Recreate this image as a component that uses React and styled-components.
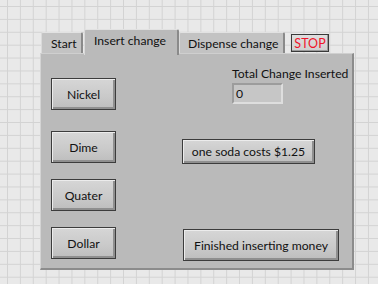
import React, { useState } from 'react';
import styled, { createGlobalStyle } from 'styled-components';

const Global = createGlobalStyle`
    html, body {
        margin: 0;
        padding: 0;
    }
    body {
        width: 378px;
        height: 284px;
        overflow: hidden;
        font-family: Lato, "Liberation Sans", sans-serif;
        background-color: #e9e9e9;
        background-image:
            linear-gradient(to right, #d3d3d3 1px, transparent 1px),
            linear-gradient(to bottom, #d3d3d3 1px, transparent 1px);
        background-size: 12.9px 12.9px;
        background-position: 7px 6px;
    }
`;

const Page = styled.div`
    padding: 29px 0 0 40px;
    width: 378px;
    height: 284px;
    box-sizing: border-box;
`;

const TabRow = styled.div`
    display: flex;
    align-items: flex-end;
    height: 24px;
    padding-left: 1px;
    position: relative;
    z-index: 1;
`;

const Tab = styled.div`
    box-sizing: border-box;
    height: ${p => (p.$active ? '26px' : '21px')};
    margin-bottom: ${p => (p.$active ? '-2px' : '0')};
    width: ${p => p.$w}px;
    margin-right: ${p => p.$gap || 0}px;
    padding-left: ${p => p.$pad}px;
    display: flex;
    align-items: center;
    white-space: nowrap;
    font-size: 12.2px;
    color: #111;
    background: ${p => (p.$active ? '#bababa' : '#c3c3c3')};
    border-top: 1px solid #e2e2e2;
    border-left: 1px solid #dadada;
    border-right: 2px solid #8a8a8a;
    border-radius: 2px 2px 0 0;
    padding-bottom: ${p => (p.$active ? '4px' : '0')};
`;

const StopButton = styled.button`
    box-sizing: border-box;
    height: 18px;
    width: 38px;
    margin-left: 6px;
    margin-bottom: 1px;
    padding: 0;
    font-family: inherit;
    font-size: 12.5px;
    color: #f0142a;
    background: linear-gradient(#dedede, #cfcfcf);
    border: 1px solid #3a3a3a;
    box-shadow: inset -1px -1px 0 #9a9a9a;
`;

const Body = styled.div`
    box-sizing: border-box;
    width: 314px;
    height: 217px;
    background: #bababa;
    border-top: 1px solid #cfcfcf;
    border-left: 1px solid #d4d4d4;
    border-right: 2px solid #8c8c8c;
    border-bottom: 2px solid #8c8c8c;
    display: flex;
    padding: 24px 0 0 10px;
`;

const CoinColumn = styled.div`
    display: flex;
    flex-direction: column;
    width: 65px;
`;

const PanelButton = styled.button`
    box-sizing: border-box;
    width: ${p => p.$w}px;
    height: ${p => p.$h || 32}px;
    margin-top: ${p => p.$top || 0}px;
    margin-left: ${p => p.$left || 0}px;
    padding: 0;
    white-space: nowrap;
    font-family: inherit;
    font-size: 12.2px;
    color: #111;
    background: linear-gradient(#d6d6d6, #c9c9c9 60%, #bdbdbd);
    border: 1px solid #3c3c3c;
    box-shadow:
        inset 1px 1px 0 #ececec,
        inset -2px -2px 0 #8f8f8f;
    cursor: pointer;
`;

const RightColumn = styled.div`
    display: flex;
    flex-direction: column;
    margin-left: 66px;
    width: 170px;
`;

const Label = styled.div`
    font-size: 12.2px;
    color: #111;
    margin-left: 50px;
    margin-top: -12px;
    white-space: nowrap;
    line-height: 16px;
`;

const Numeric = styled.div`
    box-sizing: border-box;
    width: 51px;
    height: 21px;
    margin-left: 50px;
    margin-top: 1px;
    background: #c6c6c6;
    border-top: 2px solid #9c9c9c;
    border-left: 2px solid #9c9c9c;
    border-right: 2px solid #dedede;
    border-bottom: 2px solid #dedede;
    font-size: 12.2px;
    line-height: 17px;
    padding-left: 2px;
    color: #111;
`;

const coins = [
    { name: 'Nickel', top: 0 },
    { name: 'Dime', top: 21 },
    { name: 'Quater', top: 16 },
    { name: 'Dollar', top: 16 },
];

export default function App() {
    const [total, setTotal] = useState(0);
    return (
        <>
            <Global />
            <Page>
                <TabRow>
                    <Tab $w={42} $pad={9} $gap={1}>Start</Tab>
                    <Tab $active $w={95} $pad={9}>Insert change</Tab>
                    <Tab $w={106} $pad={8}>Dispense change</Tab>
                    <StopButton>STOP</StopButton>
                </TabRow>
                <Body>
                    <CoinColumn>
                        {coins.map(c => (
                            <PanelButton key={c.name} $w={65} $top={c.top} onClick={() => setTotal(total)}>
                                {c.name}
                            </PanelButton>
                        ))}
                    </CoinColumn>
                    <RightColumn>
                        <Label>Total Change Inserted</Label>
                        <Numeric>{total}</Numeric>
                        <PanelButton $w={133} $h={25} $top={35}>one soda costs $1.25</PanelButton>
                        <PanelButton $w={156} $top={65} $left={1}>Finished inserting money</PanelButton>
                    </RightColumn>
                </Body>
            </Page>
        </>
    );
}
